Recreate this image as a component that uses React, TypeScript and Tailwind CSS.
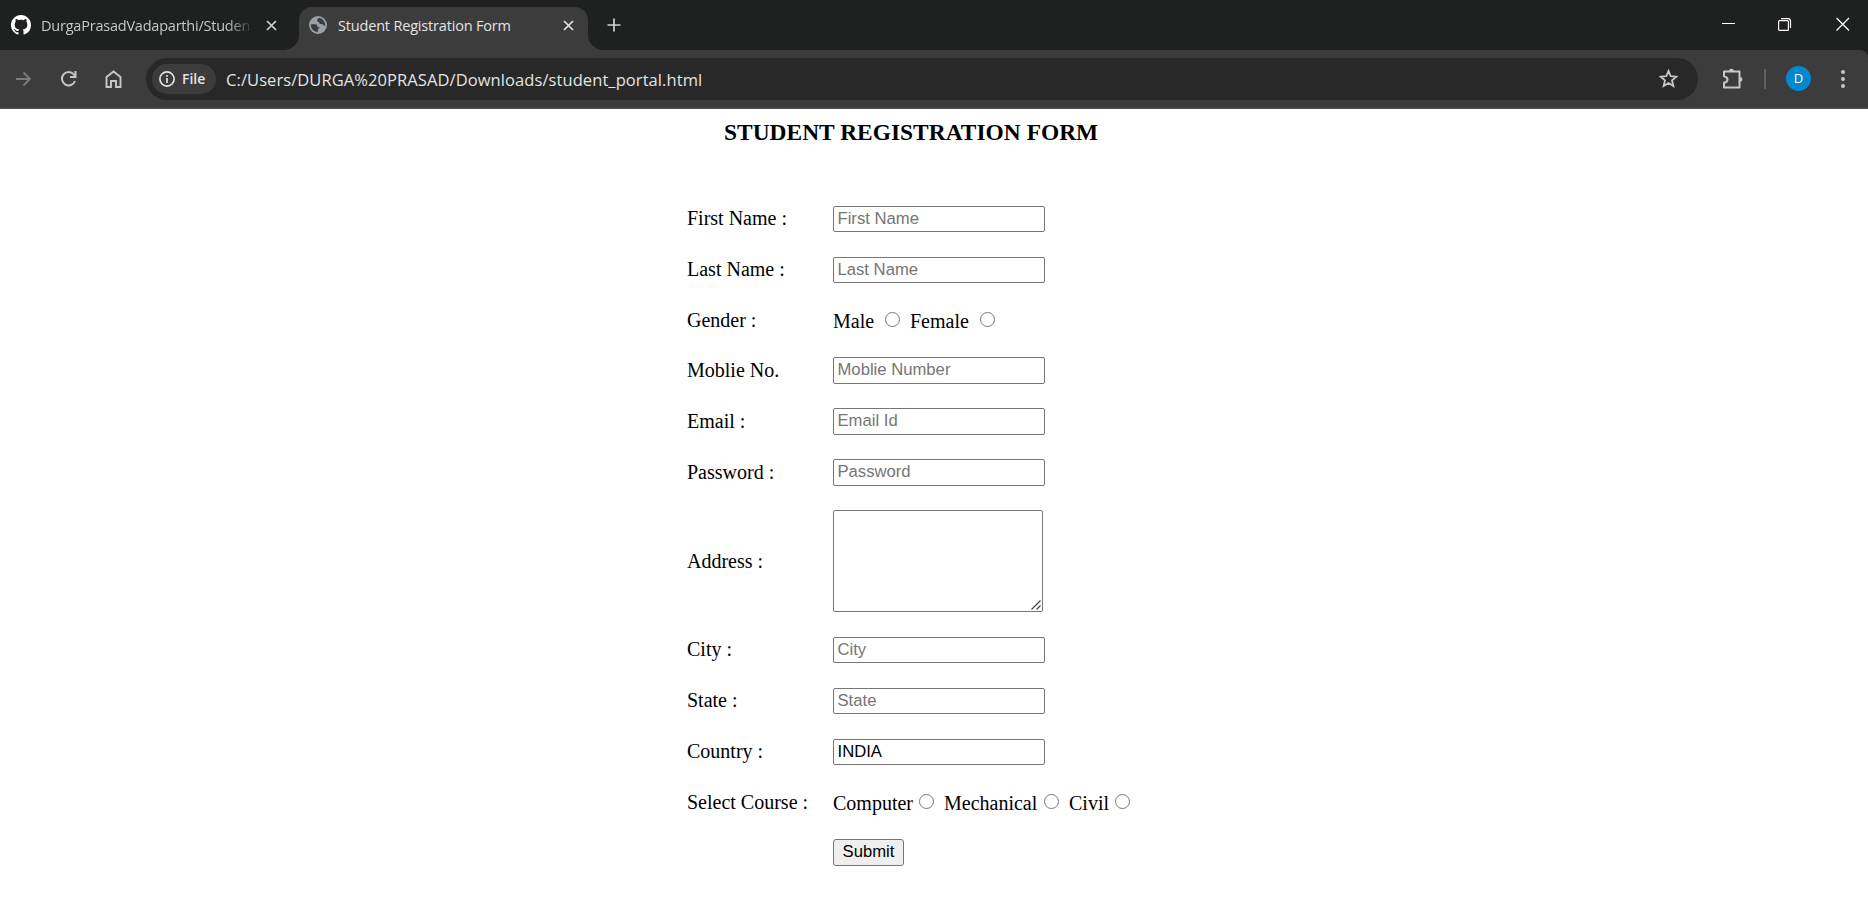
import React from "react";

const SEGOE = "font-['Open_Sans',sans-serif]";

function Github() {
  return (
    <svg width="20" height="20" viewBox="0 0 16 16" fill="#fff">
      <path d="M8 0C3.58 0 0 3.58 0 8c0 3.54 2.29 6.53 5.47 7.59.4.07.55-.17.55-.38 0-.19-.01-.82-.01-1.49-2.01.37-2.53-.49-2.69-.94-.09-.23-.48-.94-.82-1.13-.28-.15-.68-.52-.01-.53.63-.01 1.08.58 1.23.82.72 1.21 1.87.87 2.33.66.07-.52.28-.87.51-1.07-1.78-.2-3.64-.89-3.64-3.95 0-.87.31-1.59.82-2.15-.08-.2-.36-1.02.08-2.12 0 0 .67-.21 2.2.82.64-.18 1.32-.27 2-.27s1.36.09 2 .27c1.53-1.04 2.2-.82 2.2-.82.44 1.1.16 1.92.08 2.12.51.56.82 1.27.82 2.15 0 3.07-1.87 3.75-3.65 3.95.29.25.54.73.54 1.48 0 1.07-.01 1.93-.01 2.2 0 .21.15.46.55.38A8.01 8.01 0 0 0 16 8c0-4.42-3.58-8-8-8z" />
    </svg>
  );
}

function Globe() {
  return (
    <svg width="18" height="18" viewBox="0 0 18 18">
      <circle cx="9" cy="9" r="9" fill="#9aa0a6" />
      <path
        d="M1.8 8.2h4.4c1.6 0 2.2.9 2.2 2.1 0 .8.5 1 1.3 1h.9c0 1.5-.7 1.5-1.7 1.5v3.3A7.2 7.2 0 0 1 1.8 8.2zM10.8 2.1c-1.8.2-2.6 1.100-2.6 2.300 0 1.300.9 1.500 2 1.500 0 1.500.3 2.200 1.700 2.200h.9c1.200 0 1.300 1.700 3.100 1.700h.3a7.200 7.200 0 0 0-5.400-7.700z"
        fill="#3c3c3c"
      />
    </svg>
  );
}

function Cross({ className }: { className: string }) {
  return (
    <svg className={className} width="11" height="11" viewBox="0 0 11 11" stroke="currentColor" strokeWidth="1.7">
      <path d="M1 1l9 9M10 1l-9 9" />
    </svg>
  );
}

function TabStrip() {
  return (
    <div className="flex h-[50px] bg-[#1f2120] text-[14.5px]">
      <div className="flex w-[284px] items-start pl-[11px] pt-[15px]">
        <Github />
        <span className="ml-[10px] mt-px w-[209px] overflow-hidden whitespace-nowrap leading-5 tracking-[-0.22px] text-[#c7c7c7] [mask-image:linear-gradient(to_right,#000_186px,transparent_213px)]">
          DurgaPrasadVadaparthi/Studen
        </span>
        <Cross className="ml-[15.5px] mt-[5px] text-[#d0d0d0]" />
      </div>
      <div className="flex w-[15px] items-end bg-[#3c3c3c]">
        <div className="h-full w-full rounded-br-[15px] bg-[#1f2120]" />
      </div>
      <div className="flex w-[289px] bg-[#1f2120] pt-[7px]">
        <div className="flex w-full items-start rounded-t-[13px] bg-[#3c3c3c] pl-[10px] pt-[9px]">
          <Globe />
          <span className="ml-[11px] w-[201px] whitespace-nowrap leading-5 tracking-[-0.18px] text-[#e3e3e3]">
            Student Registration Form
          </span>
          <Cross className="ml-[24px] mt-[4px] text-[#e3e3e3]" />
        </div>
      </div>
      <div className="w-[15px] bg-[#3c3c3c]">
        <div className="h-full rounded-bl-[15px] bg-[#1f2120]" />
      </div>
      <svg className="ml-[4px] mt-[18px]" width="14" height="14" viewBox="0 0 14 14" stroke="#d0d0d0" strokeWidth="1.7">
        <path d="M7 .5v13M.5 7h13" />
      </svg>
      <div className="ml-auto flex pr-[18px] pt-[17px] text-white">
        <svg width="14" height="14" viewBox="0 0 14 14" stroke="currentColor">
          <path d="M0 6.5h13" />
        </svg>
        <svg className="ml-[42px]" width="14" height="15" viewBox="0 0 14 15" fill="none" stroke="currentColor" strokeWidth="1.2">
          <rect x=".6" y="3.600" width="9.800" height="9.800" rx="1" />
          <path d="M3 1.600h7q2.500 0 2.500 2.500v6.800" />
        </svg>
        <svg className="ml-[44px]" width="14" height="14" viewBox="0 0 14 14" stroke="currentColor" strokeWidth="1.2">
          <path d="M.5 1l12.500 12.500M13 1L.5 13.500" />
        </svg>
      </div>
    </div>
  );
}

function Toolbar() {
  return (
    <div className="bg-[#1f2120]">
      <div className="flex h-[59px] items-center rounded-tr-[8px] border-b-2 border-[#474747] bg-[#3c3c3c]">
        <svg className="ml-[16px]" width="15" height="14" viewBox="0 0 15 14" fill="none" stroke="#7d7d7d" strokeWidth="1.8">
          <path d="M0 7h14M7.5.5L14 7l-6.500 6.500" />
        </svg>
        <svg className="ml-[30px]" width="16" height="16" viewBox="0 0 16 16" fill="none" stroke="#c7c7c7" strokeWidth="2">
          <path d="M14 10A6.7 6.7 0 1 1 12.8 3.4L14.5 5" />
          <path d="M14.500 0v6H9" />
        </svg>
        <svg className="ml-[28px]" width="17" height="18" viewBox="0 0 17 18" fill="none" stroke="#c7c7c7" strokeWidth="1.9">
          <path d="M1.500 17V7L8.500 1.500 15.500 7v10h-4.500v-6h-5v6z" />
        </svg>
        <div className="ml-[24px] flex h-[42px] w-[1552px] items-center rounded-full bg-[#282828] pl-[6px]">
          <div className="flex h-[30px] w-[64px] items-center rounded-full bg-[#3c3c3c] pl-[7px]">
            <svg width="16" height="16" viewBox="0 0 16 16" fill="none" stroke="#e3e3e3" strokeWidth="1.7">
              <circle cx="8" cy="8" r="7.1" />
              <path d="M8 7v5M8 4v1.7" />
            </svg>
            <span className="ml-[7px] text-[14px] font-semibold leading-5 text-[#e3e3e3]">File</span>
          </div>
          <span className="ml-[10px] mt-[2px] whitespace-nowrap text-[16.5px] leading-6 tracking-[0.08px] text-[#e3e3e3]">
            C:/Users/DURGA%20PRASAD/Downloads/student_portal.html
          </span>
          <svg className="ml-auto mr-[20px]" width="19" height="19" viewBox="0 0 20 20" fill="none" stroke="#c7c7c7" strokeWidth="1.9">
            <path d="M10 2l2.300 5.600 6 .5-4.600 3.900 1.400 5.900L10 14.700l-5.100 3.200 1.400-5.900L1.700 8.100l6-.5z" />
          </svg>
        </div>
        <svg className="ml-[24px]" width="21" height="21" viewBox="0 0 21 21" fill="none" stroke="#c7c7c7" strokeWidth="2">
          <path d="M2 3.500h15.500v16H2v-4.700q3.500-.8 3.500-3.300T2 8.200z" strokeLinejoin="round" />
          <path d="M7 3.500a2.200 2.600 0 0 1 4.800 0zM17.500 9a2.600 2.200 0 0 1 0 4.800z" fill="#c7c7c7" stroke="none" />
        </svg>
        <div className="ml-[21px] h-[20px] w-[2px] bg-[#5f5f5f]" />
        <div className="ml-[20px] flex size-[25px] items-center justify-center rounded-full bg-[#0288d1] text-[13px] text-white">
          D
        </div>
        <div className="ml-[30px] flex flex-col gap-[3px]">
          <i className="size-[4px] rounded-full bg-[#c7c7c7]" />
          <i className="size-[4px] rounded-full bg-[#c7c7c7]" />
          <i className="size-[4px] rounded-full bg-[#c7c7c7]" />
        </div>
      </div>
    </div>
  );
}

function Row({ label, size = "h-[51px]", pad = "", children }: { label?: string; size?: string; pad?: string; children: React.ReactNode }) {
  return (
    <div className={`flex items-start ${size}`}>
      <label className={`w-[146px] shrink-0 leading-6 ${pad}`}>{label}</label>
      {children}
    </div>
  );
}

const FIELD =
  "block w-[212px] rounded-[2px] border border-[#767676] bg-white pb-px pl-[3.5px] font-['Liberation_Sans',sans-serif] text-[16.667px] leading-5 text-black placeholder:text-[#757575] placeholder:opacity-100 outline-none";

function Field({ tall, ...rest }: { tall?: boolean } & React.InputHTMLAttributes<HTMLInputElement>) {
  return <input className={`${FIELD} ${tall ? "h-[27px] pb-[2px]" : "h-[26px]"}`} {...rest} />;
}

function Radio({ name }: { name: string }) {
  return <input type="radio" name={name} className="mr-px mt-[3px] size-[15px] shrink-0 appearance-none rounded-full border border-[#767676] bg-white" />;
}

export default function App() {
  return (
    <div className={`flex h-[906px] w-[1868px] flex-col overflow-hidden bg-white ${SEGOE}`}>
      <TabStrip />
      <Toolbar />
      <main className="pl-[687px] font-['Liberation_Serif',serif] text-[20px] text-black">
        <h3 className="h-[97px] pl-[37px] pt-[10px] text-[23.4px] font-bold leading-[27px] tracking-[0.03px]">STUDENT REGISTRATION FORM</h3>
        <form>
          <Row label="First Name :"><Field placeholder="First Name" /></Row>
          <Row label="Last Name :"><Field placeholder="Last Name" /></Row>
          <Row label="Gender :" size="h-[49px]">
            <div className="flex pt-px leading-6">
              <span className="w-[52px]">Male</span>
              <Radio name="gender" />
              <span className="ml-[9px] w-[70px]">Female</span>
              <Radio name="gender" />
            </div>
          </Row>
          <Row label="Moblie No." pad="pt-px"><Field tall placeholder="Moblie Number" /></Row>
          <Row label="Email :" pad="pt-px"><Field tall placeholder="Email Id" /></Row>
          <Row label="Password :" pad="pt-px"><Field tall type="password" placeholder="Password" /></Row>
          <Row label="Address :" size="h-[127px]" pad="pt-[39px]">
            <div className="flex h-[102px] w-[210px] items-end justify-end rounded-[2px] border border-[#767676] p-px">
              <svg width="10" height="10" viewBox="0 0 10 10" stroke="#444" strokeWidth="1.3">
                <path d="M.5 9.500l9-9M5.500 9.500l4-4" />
              </svg>
            </div>
          </Row>
          <Row label="City :"><Field placeholder="City" /></Row>
          <Row label="State :"><Field placeholder="State" /></Row>
          <Row label="Country :"><Field defaultValue="INDIA" /></Row>
          <Row label="Select Course :" size="h-[49px]">
            <div className="flex pt-px leading-6">
              <span className="w-[86px]">Computer</span>
              <Radio name="course" />
              <span className="ml-[9px] w-[100px]">Mechanical</span>
              <Radio name="course" />
              <span className="ml-[9px] w-[46px]">Civil</span>
              <Radio name="course" />
            </div>
          </Row>
          <Row>
            <button
              type="button"
              className="h-[27px] w-[71px] rounded-[3px] border border-[#767676] bg-[#efefef] pb-[2px] font-['Liberation_Sans',sans-serif] text-[16.667px] leading-[22px]"
            >
              Submit
            </button>
          </Row>
        </form>
      </main>
    </div>
  );
}
